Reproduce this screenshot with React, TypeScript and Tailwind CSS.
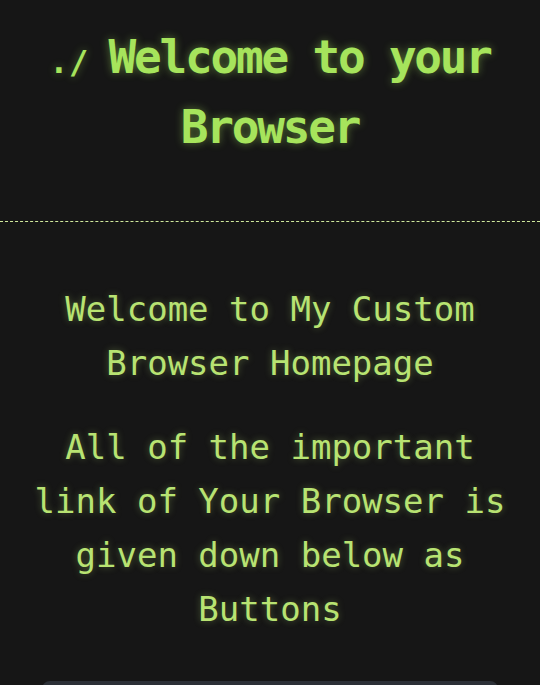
import React from "react";

export default function App() {
    return (
        <div className="h-[685px] bg-[#161616] font-['DejaVu_Sans_Mono',monospace] overflow-hidden">
            {/* Header */}
            <header className="pt-[22px] pb-[59px] border-b border-dashed border-[#cfe89c] text-center">
                <h1 className="text-[46px] leading-[70px] font-bold tracking-[-2.2px] text-[#a6e45c] [text-shadow:0_0_8px_rgba(166,228,92,0.45)]">
                    <span className="text-[32px] leading-none tracking-[0.5px]">./ </span>Welcome to your Browser
                </h1>
            </header>

            {/* Intro */}
            <main className="px-[30px] pt-[60px] text-center text-[34px] leading-[54px] text-[#b8e372] [text-shadow:0_0_7px_rgba(184,227,114,0.35)]">
                <h2>Welcome to My Custom Browser Homepage</h2>
                <p className="mt-[30px]">All of the important link of Your Browser is given down below as Buttons</p>

                {/* Link buttons */}
                <div className="mt-[45px] mx-[12px] flex flex-col gap-4">
                    <a aria-label="Google" className="block h-[56px] rounded-lg bg-[#2c3037]" />
                </div>
            </main>
        </div>
    );
}
